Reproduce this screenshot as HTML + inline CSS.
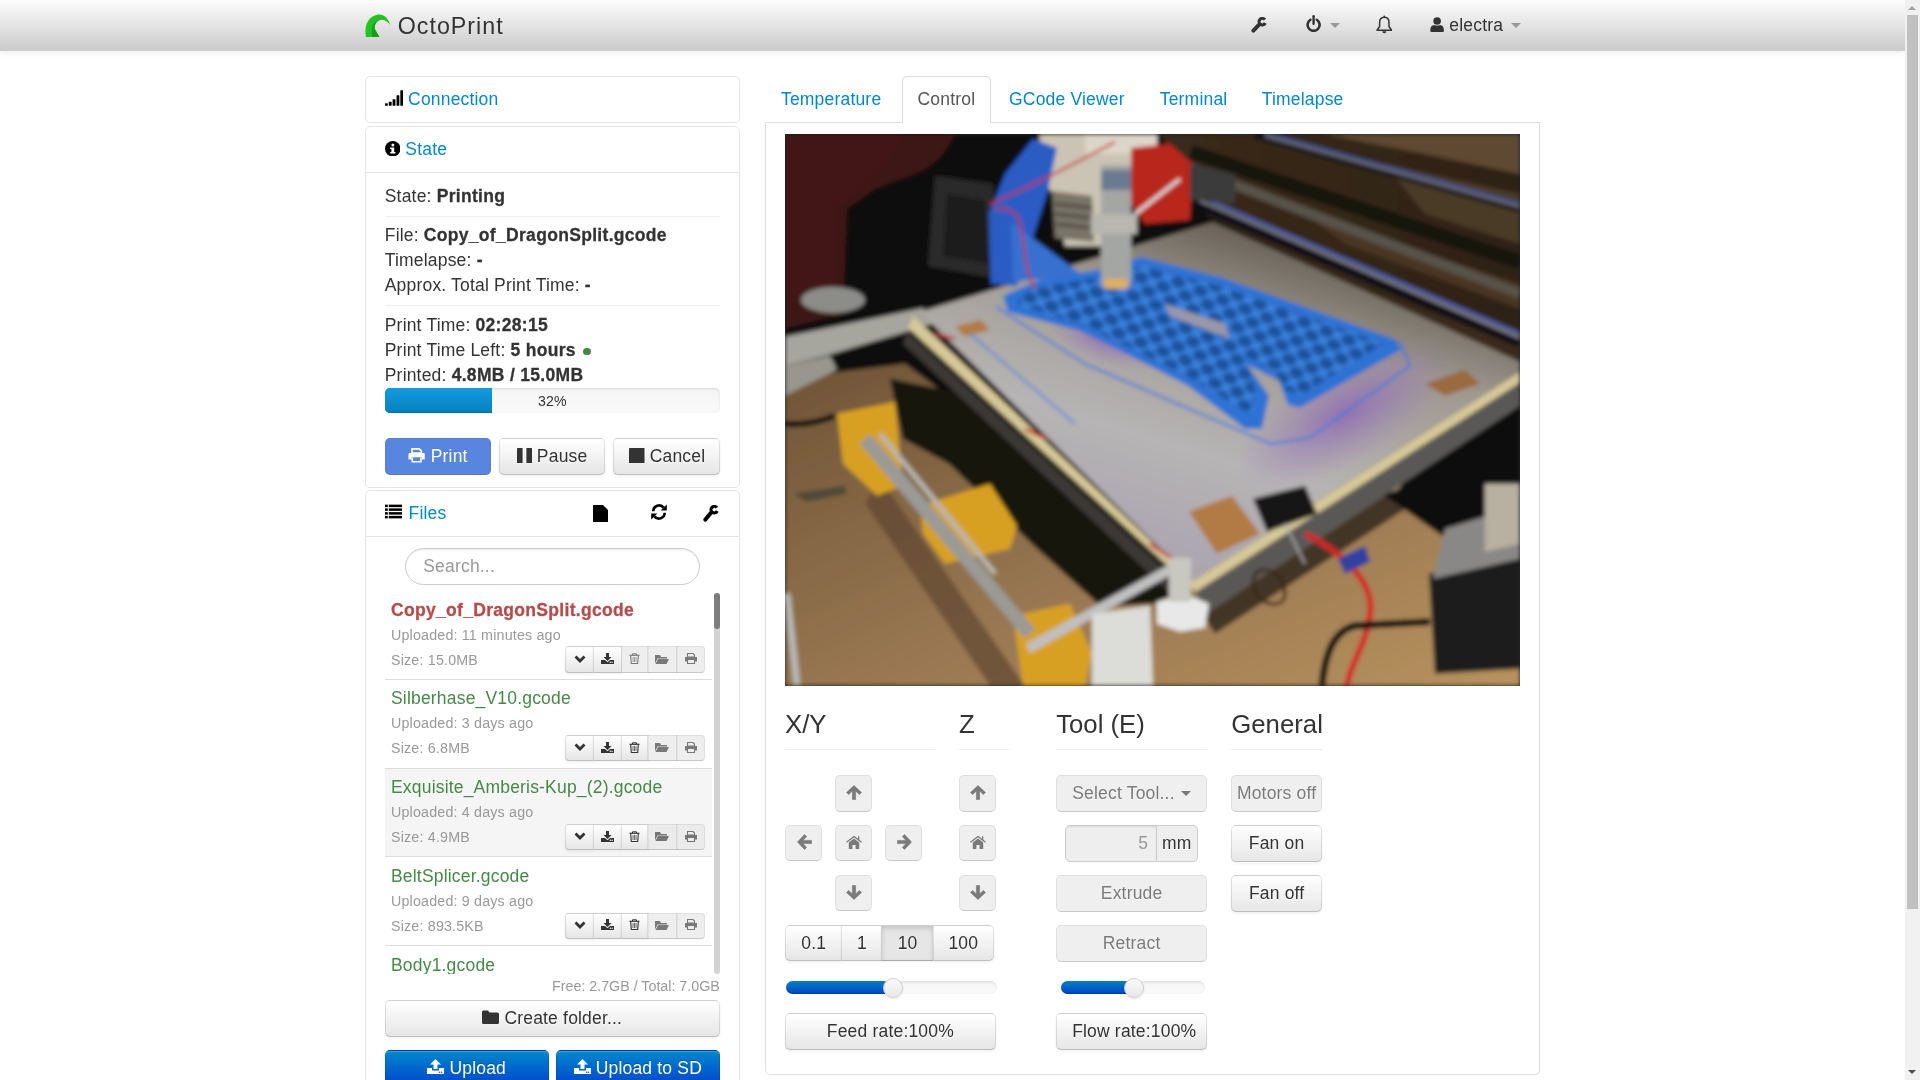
<!DOCTYPE html>
<html>
<head>
<meta charset="utf-8">
<style>
html,body{margin:0;padding:0;overflow:hidden;width:1920px;height:1080px;background:#fff}
body{font-family:"Liberation Sans",sans-serif;font-size:14px;line-height:20px;color:#333;letter-spacing:0.15px}
strong,.text-error{letter-spacing:0.25px;-webkit-text-stroke:0.22px currentColor}
#page{will-change:transform;zoom:1.25;width:1524px;height:864px;position:relative;overflow:hidden}
a{color:#0088cc;text-decoration:none}
svg{display:inline-block;vertical-align:middle}
#sb{position:absolute;left:1905px;top:0;width:15px;height:1080px;background:#f1f1f1}
#sb .th{position:absolute;left:2px;width:11px;top:15px;height:894px;background:#c1c1c1}
#sb .up,#sb .dn{position:absolute;left:3px;width:0;height:0;border-left:4.5px solid transparent;border-right:4.5px solid transparent}
#sb .up{top:5.8px;border-bottom:4.5px solid #a3a3a3}
#sb .dn{top:1070px;border-top:4.5px solid #505050}
/* navbar */
.navbar{position:absolute;left:0;top:0;width:1524px;height:40px;background:linear-gradient(to bottom,#fdfdfd,#cbcbcb);border-bottom:1px solid #cfcfcf;box-shadow:0 1px 6px rgba(0,0,0,.12)}
.container{position:absolute;left:292px;width:940px;top:0}
.brand{position:absolute;left:0;top:0;height:40px;font-size:18.6px;line-height:40px;color:#333;font-weight:normal;letter-spacing:0.8px}
.brand .logo{position:absolute;left:0;top:11.4px}
.brand span{position:absolute;left:26.2px;top:1.1px;white-space:nowrap}
.navr{position:absolute;right:0;top:0;height:40px}
.navr .it{position:absolute;top:0;height:40px;line-height:40px;color:#333}
.caret{display:inline-block;width:0;height:0;vertical-align:top;border-top:4px solid #999;border-right:4px solid transparent;border-left:4px solid transparent}
/* accordion */
.acc{position:absolute;left:0;width:298px;border:1px solid #e5e5e5;border-radius:4px;background:#fff}
.acch{height:36px;padding:0 15px;line-height:36px;position:relative}
.acch a{font-size:14px}
.acci{border-top:1px solid #e5e5e5;padding:9px 15px;position:relative}
hr{margin:5px 0;border:0;border-top:1px solid #eee;border-bottom:1px solid #fff;height:0}
.btn{display:inline-block;box-sizing:border-box;padding:4px 12px;font-size:14px;line-height:20px;text-align:center;vertical-align:middle;color:#333;text-shadow:0 1px 1px rgba(255,255,255,.75);background-color:#f5f5f5;background-image:linear-gradient(to bottom,#ffffff,#e6e6e6);border:1px solid #cccccc;border-color:rgba(0,0,0,.1) rgba(0,0,0,.1) rgba(0,0,0,.25);border-radius:4px;box-shadow:inset 0 1px 0 rgba(255,255,255,.2),0 1px 2px rgba(0,0,0,.05);white-space:nowrap}
.btn.dis{background-image:none;background-color:#e6e6e6;opacity:.65;box-shadow:none}
.btn-primary{color:#fff;text-shadow:0 -1px 0 rgba(0,0,0,.25);background-color:#006dcc;background-image:linear-gradient(to bottom,#0088cc,#0044cc);border-color:rgba(0,0,0,.1) rgba(0,0,0,.1) rgba(0,0,0,.25)}
.btn-primary.dis{background-image:none;background-color:#0044cc;opacity:.65}
.progress{position:relative;height:20px;overflow:hidden;background-color:#f7f7f7;background-image:linear-gradient(to bottom,#f5f5f5,#f9f9f9);border-radius:4px;box-shadow:inset 0 1px 2px rgba(0,0,0,.1)}
.progress .bar{position:absolute;left:0;top:0;height:20px;background-color:#0e90d2;background-image:linear-gradient(to bottom,#149bdf,#0480be);box-shadow:inset 0 -1px 0 rgba(0,0,0,.15)}
.progress .txt{position:absolute;left:0;right:0;top:0.8px;text-align:center;font-size:11.3px;line-height:20px;color:#333;letter-spacing:0.1px}

.hic{position:absolute;line-height:0}
.hic svg{display:block}
.search{position:absolute;left:31px;top:45.6px;width:236px;height:29.2px;box-sizing:border-box;border:1px solid #ccc;border-radius:15px;padding:4px 14px;font-size:14px;line-height:20px;color:#999;box-shadow:inset 0 1px 1px rgba(0,0,0,.075)}
.flist{position:absolute;left:15px;top:80.3px;width:261.6px;height:306px;overflow:hidden}
.entry{position:absolute;left:0;width:261.6px;height:70px;border-bottom:1px solid #ddd;box-sizing:content-box;font-size:11.4px;line-height:20px}
.entry .title{position:relative;top:0px;padding:5px 5px 0;line-height:20px;font-size:14px;white-space:nowrap}
.entry small{font-size:11.4px;line-height:20px;padding-left:5px;display:block;height:20px}
.muted{color:#999}
.text-error{color:#b94a48;font-weight:bold}
.text-success{color:#468847}
.bg{position:absolute;left:144.3px;top:44px;height:21px;width:112px}
.btn.bm{position:absolute;top:0;height:21px;padding:0;line-height:17px;font-size:10.5px;border-radius:0}
.btn.bm svg{vertical-align:middle;margin-top:-0.4px}
.rail{position:absolute;left:278.1px;top:81.2px;width:4.8px;height:305px;background:#d3d3d3;border-radius:3px}
.rail .thumb{position:absolute;left:0;top:0;width:4.8px;height:29.3px;background:#7d7d7d;border-radius:3px}
.free{position:absolute;right:15px;top:386.2px;font-size:11.4px;letter-spacing:0;line-height:20px;color:#999;white-space:nowrap}

.tabsline{position:absolute;left:612px;top:97.7px;width:620px;height:0;border-top:1px solid #ddd}
.tab{position:absolute;top:60.7px;height:38px;box-sizing:border-box;padding:8px 12px;line-height:20px;border:1px solid transparent;white-space:nowrap;color:#0088cc}
.tab.active{color:#555;background:#fff;border:1px solid #ddd;border-bottom-color:#fff;border-radius:4px 4px 0 0;height:38px}
.tabc{position:absolute;left:612px;top:98.7px;width:618px;height:760.6px;border:1px solid #ddd;border-top:0;border-radius:0 0 4px 4px}
.jh{position:absolute;top:568px;height:31.2px;border-bottom:1px solid #eee;font-size:20.6px;line-height:23px;color:#333;white-space:nowrap;letter-spacing:0}
.btn.box{position:absolute;width:29.2px;height:29.2px;padding:0;line-height:26.5px}
.btn.box svg{vertical-align:middle;margin-top:-3px;position:relative;left:0.9px;top:0.6px}
.btn.dgr{position:absolute;top:739.6px;height:29px;padding:4px 0}
.btn.act{background-image:none;background-color:#e6e6e6;box-shadow:inset 0 2px 4px rgba(0,0,0,.15),0 1px 2px rgba(0,0,0,.05)}
.strack{position:absolute;height:10.7px;border-radius:5.3px;background:linear-gradient(to bottom,#f5f5f5,#f9f9f9);box-shadow:inset 0 1px 2px rgba(0,0,0,.1)}
.ssel{position:absolute;height:10.7px;border-radius:5.3px 0 0 5.3px;background:linear-gradient(to bottom,#0480be,#0044cc);box-shadow:inset 0 -1px 0 rgba(0,0,0,.15)}
.shandle{position:absolute;width:16px;height:16px;border-radius:50%;box-sizing:border-box;border:1px solid #d0d0d0;background:linear-gradient(to bottom,#fafafa,#e8e8e8);box-shadow:0 1px 2px rgba(0,0,0,.1)}
.inpapp{position:absolute;height:29.8px;width:106px}
.inp{position:absolute;left:0;top:0;width:73.1px;height:29.8px;box-sizing:border-box;border:1px solid #ccc;border-radius:4px 0 0 4px;background:#eee;text-align:right;padding:4px 6px;color:#999;box-shadow:inset 0 1px 1px rgba(0,0,0,.075)}
.addon{position:absolute;left:73.1px;top:0;width:32.9px;height:29.8px;box-sizing:border-box;border:1px solid #ccc;border-left:0;border-radius:0 4px 4px 0;background:#eee;text-align:center;padding:4px 0;color:#333;text-shadow:0 1px 0 #fff}
</style>
</head>
<body>
<div id="page">
  <div class="navbar">
    <div class="container">
      <a class="brand" href="#">
        <svg class="logo" width="20.4" height="18.6" viewBox="0 0 25.5 23.2"><path d="M0.9 22.9 C-0.6 15 1 2.5 13.3 0.5 C18.5 -0.2 23.5 4 25.3 11 C22.5 7.5 19.5 5.5 16.3 5.8 C12 6.3 9.2 10 9.8 15 L14.4 22.9 Z" fill="#22c322"/><path d="M7.2 22.9 C5.8 16 7 9.5 12 6.8 C13.5 6 15 5.8 16.3 5.8 C12 6.3 9.2 10 9.8 15 L14.4 22.9 Z" fill="#15a015"/></svg>
        <span>OctoPrint</span>
      </a>
      <div class="navr">
        <div class="it" style="right:218px;width:13px"><svg width="12.8" height="12.8" viewBox="0 0 16 16" style="margin-top:-3px"><path d="M15.2 1.85 A4.8 4.8 0 1 0 15.65 6.63 L12.84 5.32 A1.7 1.7 0 1 1 12.69 3.62 Z" fill="#333"/><path d="M7.6 8.2 L2.4 13.6" stroke="#333" stroke-width="4" stroke-linecap="round"/></svg></div>
        <div class="it" style="right:160px;width:28px"><svg width="12.8" height="13.6" viewBox="0 0 16 17" style="margin-top:-4px;margin-left:0.2px"><path d="M5.42 4.76 A6 6 0 1 0 11.78 4.76" stroke="#333" stroke-width="2.6" fill="none" stroke-linecap="round"/><path d="M8.6 1.3 V8.8" stroke="#333" stroke-width="2.4" stroke-linecap="round"/></svg><span class="caret" style="margin-top:18px;margin-left:6.6px"></span></div>
        <div class="it" style="right:117.4px;width:14px"><svg width="13.3" height="14.8" viewBox="0 0 16.6 18.5" style="margin-top:-3px"><path d="M1 15.2 L3.6 11.5 V7.5 C3.6 4 5.6 2.2 8.3 2.2 C11 2.2 13 4 13 7.5 V11.5 L15.6 15.2 Z" stroke="#333" stroke-width="1.5" fill="none" stroke-linejoin="round"/><circle cx="8.3" cy="1.3" r="0.9" fill="#333"/><path d="M6.3 16.3 A2 2 0 0 0 10.3 16.3 Z" fill="#333"/></svg></div>
        <div class="it" style="right:15px;width:73px;white-space:nowrap;font-size:14px"><svg width="11.4" height="12.4" viewBox="0 0 12 13" style="margin-top:-3px"><circle cx="6" cy="3.3" r="3.2" fill="#333"/><path d="M0.3 11.3 C0.3 8 1.8 7 3.6 6.8 C4.6 7.4 7.4 7.4 8.4 6.8 C10.2 7 11.7 8 11.7 11.3 Q11.7 12.8 10.5 12.8 H1.5 Q0.3 12.8 0.3 11.3 Z" fill="#333"/></svg> electra <span class="caret" style="margin-top:18px;margin-left:2px"></span></div>
      </div>
    </div>
  </div>

  <div class="container" style="top:0">
    <!-- Connection -->
    <div class="acc" style="top:60.8px">
      <div class="acch"><a href="#"><svg width="14.6" height="12.6" viewBox="0 0 18.2 15.7" style="margin-top:-4px;margin-right:0px"><rect x="0" y="13.1" width="2.8" height="2.6" rx="0.5" fill="#000"/><rect x="3.8" y="11.799999999999999" width="2.8" height="3.9" rx="0.5" fill="#000"/><rect x="7.6" y="9.2" width="2.8" height="6.5" rx="0.5" fill="#000"/><rect x="11.5" y="5.299999999999999" width="2.8" height="10.4" rx="0.5" fill="#000"/><rect x="15.3" y="0.1999999999999993" width="2.8" height="15.5" rx="0.5" fill="#000"/></svg> Connection</a></div>
    </div>
    <!-- State -->
    <div class="acc" style="top:100.8px">
      <div class="acch"><a href="#"><svg width="12.4" height="12.4" viewBox="0 0 15.5 15.5" style="margin-top:-3px"><circle cx="7.75" cy="7.75" r="7.75" fill="#000"/><circle cx="7.9" cy="3.9" r="1.5" fill="#fff"/><path d="M5.2 6.4 H9.2 V10.9 H10.4 V12.6 H5.2 V10.9 H6.4 V8.1 H5.2 Z" fill="#fff"/></svg> State</a></div>
      <div class="acci" id="state">
        State: <strong>Printing</strong>
        <hr style="margin:5px 0 4.4px">
        File: <strong>Copy_of_DragonSplit.gcode</strong><br>
        Timelapse: <strong>-</strong><br>
        Approx. Total Print Time: <strong>-</strong>
        <hr style="margin:5.6px 0 5px">
        Print Time: <strong>02:28:15</strong><br>
        Print Time Left: <strong>5 hours</strong> <span style="display:inline-block;width:6px;height:6px;border-radius:3px;background:#468847;vertical-align:middle;margin-left:2px"></span><br>
        Printed: <strong>4.8MB / 15.0MB</strong><br>
        <div class="progress" style="margin-top:0px"><div class="bar" style="width:86px"></div><div class="txt">32%</div></div>
        <div style="height:19.8px"></div>
        <div style="position:relative;height:30px">
          <span class="btn btn-primary dis" style="position:absolute;left:0;top:0;width:85.3px"><svg width="13.8" height="11.7" viewBox="0 0 17.3 14.6" style="margin-top:-3px"><path d="M4 0.8 H11.3 L13.3 2.8 V5 H4 Z" fill="none" stroke="#fff" stroke-width="1.6"/><path d="M0.5 6.3 Q0.5 5 1.8 5 H15.5 Q16.8 5 16.8 6.3 V11.6 H13.8 V9.2 H3.5 V11.6 H0.5 Z" fill="#fff"/><path d="M4.3 9.5 V13.8 H13 V9.5" fill="none" stroke="#fff" stroke-width="1.6"/></svg> Print</span>
          <span class="btn" style="position:absolute;left:91.4px;top:0;width:85px"><svg width="12" height="12.24" viewBox="0 0 15 15.3" style="margin-top:-3px"><rect x="0" y="0" width="5.6" height="15.3" rx="0.6" fill="#333"/><rect x="9.4" y="0" width="5.6" height="15.3" rx="0.6" fill="#333"/></svg> Pause</span>
          <span class="btn" style="position:absolute;left:182.7px;top:0;width:85.3px"><svg width="12.4" height="12.24" viewBox="0 0 15.5 15.3" style="margin-top:-3px"><rect x="0" y="0" width="15.5" height="15.3" rx="0.6" fill="#333"/></svg> Cancel</span>
        </div>
      </div>
    </div>
    <!-- Files -->
    <div class="acc" id="files" style="top:392px;height:520px">
      <div class="acch"><a href="#"><svg width="14" height="12" viewBox="0 0 14 12" style="margin-top:-4px;margin-right:1px"><g fill="#000"><rect x="0" y="0.5" width="2.2" height="2"/><rect x="3" y="0.5" width="11" height="2"/><rect x="0" y="3.5" width="2.2" height="2"/><rect x="3" y="3.5" width="11" height="2"/><rect x="0" y="6.5" width="2.2" height="2"/><rect x="3" y="6.5" width="11" height="2"/><rect x="0" y="9.5" width="2.2" height="2"/><rect x="3" y="9.5" width="11" height="2"/></g></svg> Files</a>
      </div>
      <div class="acci" style="position:absolute;left:0;top:36px;width:298px;height:600px;padding:0;border-top:1px solid #e5e5e5"></div>
      <a class="hic" style="left:181.2px;top:11.4px"><svg width="12.00" height="13.60" viewBox="0 0 15 17" style=""><path d="M0 0 H10 L15 5 V17 H0 Z" fill="#000"/></svg></a>
      <a class="hic" style="left:227.8px;top:10.1px"><svg width="12.80" height="12.80" viewBox="0 0 16 16" style=""><path d="M2.3 7.2 A5.8 5.8 0 0 1 12.6 3.6" stroke="#000" stroke-width="2.6" fill="none"/><path d="M15.8 0.4 V6.6 H9.6 Z" fill="#000"/><path d="M13.7 8.8 A5.8 5.8 0 0 1 3.4 12.4" stroke="#000" stroke-width="2.6" fill="none"/><path d="M0.2 15.6 V9.4 H6.4 Z" fill="#000"/></svg></a>
      <a class="hic" style="left:269.4px;top:10.9px"><svg width="12.80" height="13.60" viewBox="0 0 16 17" style=""><path d="M15.2 1.85 A4.8 4.8 0 1 0 15.65 6.63 L12.84 5.32 A1.7 1.7 0 1 1 12.69 3.62 Z" fill="#000"/><path d="M7.6 8.2 L2.4 14.6" stroke="#000" stroke-width="4" stroke-linecap="round"/></svg></a>
      <div class="search">Search...</div>
      <div class="flist"><div class="entry" style="top:0px;"><div class="title text-error">Copy_of_DragonSplit.gcode</div><small class="muted">Uploaded: 11 minutes ago</small><small class="muted">Size: 15.0MB</small><div class="bg"><span class="btn bm" style="left:0.0px;width:23.2px;border-radius:3px 0 0 3px;"><svg width="9.60" height="6.40" viewBox="0 0 12 8" style=""><path d="M1.5 1.5 L6 6 L10.5 1.5" stroke="#333" stroke-width="2.8" fill="none" stroke-linejoin="miter"/></svg></span><span class="btn bm" style="left:22.2px;width:23.6px;border-radius:0;"><svg width="10.40" height="8.80" viewBox="0 0 13 11" style=""><path d="M5 0 H8 V4 H10.5 L6.5 8 L2.5 4 H5 Z" fill="#333"/><path d="M0 7 H4 L6.5 9.3 L9 7 H13 V11 H0 Z" fill="#333"/><circle cx="9.3" cy="9.3" r="0.7" fill="#fff"/><circle cx="11.2" cy="9.3" r="0.7" fill="#fff"/></svg></span><span class="btn bm dis" style="left:44.8px;width:22.0px;border-radius:0;"><svg width="8.80" height="8.80" viewBox="0 0 11 11" style=""><path d="M0.5 2.3 H10.5" stroke="#333" stroke-width="1.2"/><path d="M3.5 2 V0.8 H7.5 V2" stroke="#333" stroke-width="1" fill="none"/><path d="M1.7 3 L2.3 10.5 H8.7 L9.3 3" stroke="#333" stroke-width="1.1" fill="none"/><path d="M4 4 V9 M5.5 4 V9 M7 4 V9" stroke="#333" stroke-width="0.7"/></svg></span><span class="btn bm dis" style="left:65.8px;width:24.1px;border-radius:0;"><svg width="11.20" height="8.00" viewBox="0 0 14 10" style=""><path d="M0 1 V9.5 L2.5 4.5 H12 V3 H6 L5 1 Z" fill="#333"/><path d="M0.5 10 L3 5 H14 L11.5 10 Z" fill="#333"/></svg></span><span class="btn bm dis" style="left:88.9px;width:23.2px;border-radius:0 3px 3px 0;"><svg width="9.60" height="8.80" viewBox="0 0 12 11" style=""><path d="M2.5 0.5 H8 L9.5 2 V4 H2.5 Z" fill="none" stroke="#333" stroke-width="1.1"/><path d="M0 4 H12 V8.5 H10 V7 H2 V8.5 H0 Z" fill="#333"/><path d="M2.5 7 V10.5 H9.5 V7" fill="none" stroke="#333" stroke-width="1.1"/></svg></span></div></div><div class="entry" style="top:71px;"><div class="title text-success">Silberhase_V10.gcode</div><small class="muted">Uploaded: 3 days ago</small><small class="muted">Size: 6.8MB</small><div class="bg"><span class="btn bm" style="left:0.0px;width:23.2px;border-radius:3px 0 0 3px;"><svg width="9.60" height="6.40" viewBox="0 0 12 8" style=""><path d="M1.5 1.5 L6 6 L10.5 1.5" stroke="#333" stroke-width="2.8" fill="none" stroke-linejoin="miter"/></svg></span><span class="btn bm" style="left:22.2px;width:23.6px;border-radius:0;"><svg width="10.40" height="8.80" viewBox="0 0 13 11" style=""><path d="M5 0 H8 V4 H10.5 L6.5 8 L2.5 4 H5 Z" fill="#333"/><path d="M0 7 H4 L6.5 9.3 L9 7 H13 V11 H0 Z" fill="#333"/><circle cx="9.3" cy="9.3" r="0.7" fill="#fff"/><circle cx="11.2" cy="9.3" r="0.7" fill="#fff"/></svg></span><span class="btn bm" style="left:44.8px;width:22.0px;border-radius:0;"><svg width="8.80" height="8.80" viewBox="0 0 11 11" style=""><path d="M0.5 2.3 H10.5" stroke="#333" stroke-width="1.2"/><path d="M3.5 2 V0.8 H7.5 V2" stroke="#333" stroke-width="1" fill="none"/><path d="M1.7 3 L2.3 10.5 H8.7 L9.3 3" stroke="#333" stroke-width="1.1" fill="none"/><path d="M4 4 V9 M5.5 4 V9 M7 4 V9" stroke="#333" stroke-width="0.7"/></svg></span><span class="btn bm dis" style="left:65.8px;width:24.1px;border-radius:0;"><svg width="11.20" height="8.00" viewBox="0 0 14 10" style=""><path d="M0 1 V9.5 L2.5 4.5 H12 V3 H6 L5 1 Z" fill="#333"/><path d="M0.5 10 L3 5 H14 L11.5 10 Z" fill="#333"/></svg></span><span class="btn bm dis" style="left:88.9px;width:23.2px;border-radius:0 3px 3px 0;"><svg width="9.60" height="8.80" viewBox="0 0 12 11" style=""><path d="M2.5 0.5 H8 L9.5 2 V4 H2.5 Z" fill="none" stroke="#333" stroke-width="1.1"/><path d="M0 4 H12 V8.5 H10 V7 H2 V8.5 H0 Z" fill="#333"/><path d="M2.5 7 V10.5 H9.5 V7" fill="none" stroke="#333" stroke-width="1.1"/></svg></span></div></div><div class="entry" style="top:142px;background:#f5f5f5;"><div class="title text-success">Exquisite_Amberis-Kup_(2).gcode</div><small class="muted">Uploaded: 4 days ago</small><small class="muted">Size: 4.9MB</small><div class="bg"><span class="btn bm" style="left:0.0px;width:23.2px;border-radius:3px 0 0 3px;"><svg width="9.60" height="6.40" viewBox="0 0 12 8" style=""><path d="M1.5 1.5 L6 6 L10.5 1.5" stroke="#333" stroke-width="2.8" fill="none" stroke-linejoin="miter"/></svg></span><span class="btn bm" style="left:22.2px;width:23.6px;border-radius:0;"><svg width="10.40" height="8.80" viewBox="0 0 13 11" style=""><path d="M5 0 H8 V4 H10.5 L6.5 8 L2.5 4 H5 Z" fill="#333"/><path d="M0 7 H4 L6.5 9.3 L9 7 H13 V11 H0 Z" fill="#333"/><circle cx="9.3" cy="9.3" r="0.7" fill="#fff"/><circle cx="11.2" cy="9.3" r="0.7" fill="#fff"/></svg></span><span class="btn bm" style="left:44.8px;width:22.0px;border-radius:0;"><svg width="8.80" height="8.80" viewBox="0 0 11 11" style=""><path d="M0.5 2.3 H10.5" stroke="#333" stroke-width="1.2"/><path d="M3.5 2 V0.8 H7.5 V2" stroke="#333" stroke-width="1" fill="none"/><path d="M1.7 3 L2.3 10.5 H8.7 L9.3 3" stroke="#333" stroke-width="1.1" fill="none"/><path d="M4 4 V9 M5.5 4 V9 M7 4 V9" stroke="#333" stroke-width="0.7"/></svg></span><span class="btn bm dis" style="left:65.8px;width:24.1px;border-radius:0;"><svg width="11.20" height="8.00" viewBox="0 0 14 10" style=""><path d="M0 1 V9.5 L2.5 4.5 H12 V3 H6 L5 1 Z" fill="#333"/><path d="M0.5 10 L3 5 H14 L11.5 10 Z" fill="#333"/></svg></span><span class="btn bm dis" style="left:88.9px;width:23.2px;border-radius:0 3px 3px 0;"><svg width="9.60" height="8.80" viewBox="0 0 12 11" style=""><path d="M2.5 0.5 H8 L9.5 2 V4 H2.5 Z" fill="none" stroke="#333" stroke-width="1.1"/><path d="M0 4 H12 V8.5 H10 V7 H2 V8.5 H0 Z" fill="#333"/><path d="M2.5 7 V10.5 H9.5 V7" fill="none" stroke="#333" stroke-width="1.1"/></svg></span></div></div><div class="entry" style="top:213px;"><div class="title text-success">BeltSplicer.gcode</div><small class="muted">Uploaded: 9 days ago</small><small class="muted">Size: 893.5KB</small><div class="bg"><span class="btn bm" style="left:0.0px;width:23.2px;border-radius:3px 0 0 3px;"><svg width="9.60" height="6.40" viewBox="0 0 12 8" style=""><path d="M1.5 1.5 L6 6 L10.5 1.5" stroke="#333" stroke-width="2.8" fill="none" stroke-linejoin="miter"/></svg></span><span class="btn bm" style="left:22.2px;width:23.6px;border-radius:0;"><svg width="10.40" height="8.80" viewBox="0 0 13 11" style=""><path d="M5 0 H8 V4 H10.5 L6.5 8 L2.5 4 H5 Z" fill="#333"/><path d="M0 7 H4 L6.5 9.3 L9 7 H13 V11 H0 Z" fill="#333"/><circle cx="9.3" cy="9.3" r="0.7" fill="#fff"/><circle cx="11.2" cy="9.3" r="0.7" fill="#fff"/></svg></span><span class="btn bm" style="left:44.8px;width:22.0px;border-radius:0;"><svg width="8.80" height="8.80" viewBox="0 0 11 11" style=""><path d="M0.5 2.3 H10.5" stroke="#333" stroke-width="1.2"/><path d="M3.5 2 V0.8 H7.5 V2" stroke="#333" stroke-width="1" fill="none"/><path d="M1.7 3 L2.3 10.5 H8.7 L9.3 3" stroke="#333" stroke-width="1.1" fill="none"/><path d="M4 4 V9 M5.5 4 V9 M7 4 V9" stroke="#333" stroke-width="0.7"/></svg></span><span class="btn bm dis" style="left:65.8px;width:24.1px;border-radius:0;"><svg width="11.20" height="8.00" viewBox="0 0 14 10" style=""><path d="M0 1 V9.5 L2.5 4.5 H12 V3 H6 L5 1 Z" fill="#333"/><path d="M0.5 10 L3 5 H14 L11.5 10 Z" fill="#333"/></svg></span><span class="btn bm dis" style="left:88.9px;width:23.2px;border-radius:0 3px 3px 0;"><svg width="9.60" height="8.80" viewBox="0 0 12 11" style=""><path d="M2.5 0.5 H8 L9.5 2 V4 H2.5 Z" fill="none" stroke="#333" stroke-width="1.1"/><path d="M0 4 H12 V8.5 H10 V7 H2 V8.5 H0 Z" fill="#333"/><path d="M2.5 7 V10.5 H9.5 V7" fill="none" stroke="#333" stroke-width="1.1"/></svg></span></div></div><div class="entry" style="top:284px;"><div class="title text-success">Body1.gcode</div></div></div>
      <div class="rail"><div class="thumb"></div></div>
      <div class="free">Free: 2.7GB / Total: 7.0GB</div>
      <span class="btn" style="position:absolute;left:15px;top:406.8px;width:268px"><svg width="13.60" height="11.20" viewBox="0 0 17 14" style="margin-top:-3px"><path d="M0 2 Q0 0.5 1.5 0.5 H6 L7.5 2.5 H15.5 Q17 2.5 17 4 V12.5 Q17 14 15.5 14 H1.5 Q0 14 0 12.5 Z" fill="#333"/></svg> Create folder...</span>
      <span class="btn btn-primary" style="position:absolute;left:15px;top:446.8px;width:131.1px"><svg width="13.60" height="12.00" viewBox="0 0 17 15" style="margin-top:-4px"><path d="M8.5 0 L14 5.5 H10.5 V10 H6.5 V5.5 H3 Z" fill="#fff"/><path d="M0 9 H5 V11.5 H12 V9 H17 V15 H0 Z" fill="#fff"/><circle cx="12.5" cy="13.2" r="0.8" fill="#0050c8"/><circle cx="14.6" cy="13.2" r="0.8" fill="#0050c8"/></svg> Upload</span>
      <span class="btn btn-primary" style="position:absolute;left:151.9px;top:446.8px;width:131.1px"><svg width="13.60" height="12.00" viewBox="0 0 17 15" style="margin-top:-4px"><path d="M8.5 0 L14 5.5 H10.5 V10 H6.5 V5.5 H3 Z" fill="#fff"/><path d="M0 9 H5 V11.5 H12 V9 H17 V15 H0 Z" fill="#fff"/><circle cx="12.5" cy="13.2" r="0.8" fill="#0050c8"/><circle cx="14.6" cy="13.2" r="0.8" fill="#0050c8"/></svg> Upload to SD</span>

    </div>
  </div>

<div class="tabsline"></div><a class="tab" style="left:612.0px">Temperature</a><div class="tab active" style="left:721.2px;width:71.2px">Control</div><a class="tab" style="left:794.4px">GCode Viewer</a><a class="tab" style="left:915.0px">Terminal</a><a class="tab" style="left:996.6px">Timelapse</a><div class="tabc"></div><div id="cam" style="position:absolute;left:628px;top:107.2px;width:588px;height:441.3px;background:#222;overflow:hidden"><svg width="588" height="441.3" viewBox="0 0 735 552" preserveAspectRatio="none" style="display:block">
<defs>
<filter id="bl" x="-5%" y="-5%" width="110%" height="110%"><feGaussianBlur stdDeviation="2.2"/></filter>
<linearGradient id="bedg" gradientUnits="userSpaceOnUse" x1="430" y1="90" x2="330" y2="420"><stop offset="0" stop-color="#6a6258"/><stop offset="0.25" stop-color="#9e9890"/><stop offset="0.65" stop-color="#b6b4b4"/><stop offset="1" stop-color="#aaa4b0"/></linearGradient>
<pattern id="hc" width="24" height="20" patternUnits="userSpaceOnUse" patternTransform="rotate(22)"><rect width="24" height="20" fill="#3a80dc"/><ellipse cx="12.0" cy="10.0" rx="7.5" ry="6" fill="#1f529e"/><ellipse cx="0" cy="0" rx="7.5" ry="6" fill="#1f529e"/><ellipse cx="24" cy="0" rx="7.5" ry="6" fill="#1f529e"/><ellipse cx="0" cy="20" rx="7.5" ry="6" fill="#1f529e"/><ellipse cx="24" cy="20" rx="7.5" ry="6" fill="#1f529e"/></pattern>
<radialGradient id="purp" cx="0.5" cy="0.5" r="0.5"><stop offset="0" stop-color="#8a64b8" stop-opacity="0.8"/><stop offset="1" stop-color="#9c78c0" stop-opacity="0"/></radialGradient>
<linearGradient id="woodg" x1="0" y1="0" x2="1" y2="1"><stop offset="0" stop-color="#6e5436"/><stop offset="0.5" stop-color="#957450"/><stop offset="1" stop-color="#b8925e"/></linearGradient>
<linearGradient id="wallg" x1="0" y1="0" x2="1" y2="0"><stop offset="0" stop-color="#3a2a1a"/><stop offset="1" stop-color="#2e2218"/></linearGradient>
</defs>
<g filter="url(#bl)">
<rect x="0" y="0" width="735" height="552" fill="#0e0a08"/>
<!-- red fabric top-left -->
<path d="M0 0 H170 C160 20 150 32 130 40 L90 55 L62 75 L58 180 L0 195 Z" fill="#3c1712"/>
<path d="M0 0 H120 L100 30 L70 60 L50 70 L48 160 L0 170 Z" fill="#461a12" opacity="0.7"/>
<!-- top right wall -->
<path d="M375 0 H735 V232 L600 170 L420 80 Z" fill="url(#wallg)"/>
<path d="M540 0 H735 V40 L640 20 Z" fill="#5e4a32"/><path d="M600 30 L735 60 V110 L640 80 Z" fill="#4a3a28"/>
<path d="M520 80 L735 150 V175 L560 110 Z" fill="#4a3624"/>
<path d="M450 110 L735 210 V225 L480 140 Z" fill="#3a2a1c"/>
<!-- rods -->
<path d="M470 0 L735 74" stroke="#14141c" stroke-width="9"/>
<path d="M480 -1 L735 70" stroke="#4a5a98" stroke-width="2.5"/><path d="M480 2 L735 73" stroke="#c0c0c8" stroke-width="1"/>
<path d="M406 34 L735 160" stroke="#58524a" stroke-width="10"/><path d="M406 18 L735 128" stroke="#141210" stroke-width="14"/>
<path d="M399 62 L735 206" stroke="#101018" stroke-width="15"/>
<path d="M399 56 L735 200" stroke="#5a6ab0" stroke-width="3"/><path d="M399 60 L735 204" stroke="#c8c8d0" stroke-width="1.2"/>
<!-- wood floor -->
<path d="M0 245 L120 230 L200 290 L410 450 L735 250 V552 H0 Z" fill="url(#woodg)"/>
<path d="M0 290 C20 292 35 288 50 282" stroke="#101010" stroke-width="6" fill="none"/><path d="M8 360 L60 352 L62 360 L22 368 Z" fill="#504838"/><path d="M10 720 L40 552" stroke="none"/><path d="M95 345 L240 552 H205 L80 370 Z" fill="#5e4630" opacity="0.7"/>
<path d="M2 460 L12 552" stroke="#b8b8b4" stroke-width="7"/>
<!-- dark under-bed -->
<path d="M105 245 L208 266 L337 380 L410 452 L368 470 L315 472 L251 414 L164 330 L118 305 Z" fill="#141210"/>
<path d="M418 482 L735 272 V300 L430 500 Z" fill="#2a241c" opacity="0.8"/>
<path d="M585 330 L735 262 V398 L660 404 L600 362 Z" fill="#0a0807"/><circle cx="605" cy="345" r="13" fill="#a89070"/>
<!-- gray ribbon cable -->
<path d="M0 203 L138 174 L148 190 L40 222 L0 232 Z" fill="#a6a59e"/>
<path d="M0 232 L45 222 L52 236 L0 262 Z" fill="#98968e"/>
<ellipse cx="48" cy="166" rx="32" ry="13" fill="#8c8c88"/>
<!-- bed foam/edge -->
<path d="M128 182 L408 447 L735 238 V249 L411 458 L123 194 Z" fill="#d6c898"/>
<path d="M411 458 L735 249 V272 L418 482 Z" fill="#5a5856"/>
<path d="M122 198 L412 466 L405 478 L118 210 Z" fill="#3a3836"/>
<!-- bed top -->
<path d="M135 178 L428 88 L735 228 V238 L408 447 Z" fill="url(#bedg)"/>
<ellipse cx="560" cy="280" rx="120" ry="50" fill="url(#purp)" transform="rotate(-30 560 280)"/>
<ellipse cx="320" cy="205" rx="60" ry="25" fill="url(#purp)" transform="rotate(20 320 205)"/>
<!-- red marks & copper -->
<path d="M150 200 L170 205" stroke="#c03030" stroke-width="3"/>
<path d="M240 295 L262 305" stroke="#c03030" stroke-width="3"/>
<path d="M365 410 L395 430" stroke="#c03030" stroke-width="3"/>
<path d="M404 378 L447 362 L475 400 L432 420 Z" fill="#b27a45"/>
<path d="M170 193 L195 186 L205 196 L180 203 Z" fill="#b27a45"/>
<path d="M640 250 L680 236 L695 250 L660 262 Z" fill="#9a6a40"/>
<path d="M185 200 L290 290" stroke="#4a88d8" stroke-width="2"/>
<!-- blue skirt line -->
<path d="M211 173 L300 230 L420 282 L486 310 L525 304 L625 232 L615 208" stroke="#3a7ad8" stroke-width="2.2" fill="none"/>
<!-- blue print -->
<path d="M218 162 L256 145 L319 135 L357 123 L438 144 L534 178 L611 206 L616 216 L515 274 L503 271 L494 247 L462 231 L484 262 L477 295 L460 295 L403 252 L343 221 L295 197 L223 178 Z" fill="#2e72d4"/>
<path d="M232 163 L260 152 L320 142 L357 132 L436 152 L530 185 L598 210 L515 262 L500 256 L490 240 L460 222 L470 255 L468 282 L405 244 L345 214 L295 190 L235 172 Z" fill="url(#hc)"/>
<path d="M380 170 L440 190 L445 205 L385 182 Z" fill="#9a98a8"/>
<!-- extruder group -->
<path d="M150 42 L208 50 L215 145 L143 132 Z" fill="#2c2c2c"/>
<path d="M162 60 L200 66 L204 130 L158 122 Z" fill="#1a1a1a"/>
<path d="M255 0 H372 L368 50 L348 52 L342 95 L322 112 L280 112 L268 60 L252 38 Z" fill="#cbc4b4"/>
<path d="M300 0 H372 V20 H300 Z" fill="#ddd6c8"/>
<path d="M267 57 L307 62 L309 108 L270 104 Z" fill="#787468"/>
<path d="M270 70 L307 74 M270 80 L308 84 M271 90 L308 94" stroke="#3a3834" stroke-width="2.5"/>
<path d="M330 50 H346 V100 H330 Z" fill="#2a2824"/>
<path d="M316 31 H346 V153 H316 Z" fill="#a4a6a4"/>
<path d="M316 36 H346 V56 H316 Z" fill="#6a7a90"/>
<path d="M306 80 H352 V100 H306 Z" fill="#b8b6ae"/>
<path d="M320 145 H342 V155 H320 Z" fill="#e0b060"/>
<path d="M346 14 L385 10 L408 30 L405 86 L360 90 L346 70 Z" fill="#b8281c"/>
<path d="M405 30 L450 40 L450 70 L405 66 Z" fill="#3a3a3a"/>
<path d="M248 5 L272 14 L262 60 L232 152 L206 150 L204 80 L220 40 Z" fill="#2a5cc4"/>
<path d="M226 88 L296 140 L228 148 Z" fill="#3870d0"/>
<path d="M205 70 C230 60 270 40 330 8" stroke="#c02020" stroke-width="2" fill="none"/>
<path d="M210 75 C250 70 230 120 250 155" stroke="#c02020" stroke-width="2" fill="none"/>
<path d="M350 80 L395 45" stroke="#e8e8e8" stroke-width="3"/>
<!-- yellow parts -->
<path d="M52 280 L110 268 L118 352 L92 362 L58 330 Z" fill="#d8a020"/>
<path d="M135 372 L205 350 L232 392 L225 415 L160 430 L138 400 Z" fill="#d8a020"/>
<path d="M228 482 L285 470 L307 520 L300 552 H238 Z" fill="#d8a020"/>
<!-- threaded rod & smooth rods -->
<path d="M80 305 L245 500" stroke="#9a9a96" stroke-width="14"/>
<path d="M95 300 L210 440" stroke="#b8b8b0" stroke-width="5"/>
<path d="M243 515 L385 436" stroke="#c0c0c0" stroke-width="10"/>
<!-- white parts -->
<path d="M372 468 L400 460 L424 470 L420 494 L395 498 L372 490 Z" fill="#e8e8e8"/>
<path d="M384 424 H406 V468 H384 Z" fill="#c8c8c0"/>
<path d="M307 480 L365 472 L368 552 H307 Z" fill="#dcdcd8"/>
<!-- binder clip -->
<path d="M468 365 L520 352 L532 380 L482 398 Z" fill="#181818"/><path d="M500 390 L520 430" stroke="#aaa" stroke-width="2"/>
<!-- red wire & black cable -->
<path d="M520 400 C560 420 590 450 585 480 C582 510 565 530 562 552" stroke="#d02828" stroke-width="6" fill="none"/>
<path d="M537 552 C540 520 548 498 570 492 L645 488" stroke="#0c0c0c" stroke-width="7" fill="none"/>
<path d="M553 425 L580 412 L585 428 L560 440 Z" fill="#3040a0"/>
<!-- stepper motor -->
<path d="M644 440 L735 420 V535 L650 540 Z" fill="#1c1c1c"/>
<path d="M660 395 L735 372 V425 L648 445 Z" fill="#8a8886"/>
<path d="M700 350 H735 V410 L700 418 Z" fill="#b8b0a0"/>
<!-- brown rubber band -->
<path d="M470 440 C460 470 500 480 500 460 C500 440 480 430 470 440" stroke="#3a2614" stroke-width="3" fill="none"/>
</g>
</svg>

</div><div class="jh" style="left:628px;width:120.1px">X/Y</div><div class="jh" style="left:767.2px;width:39.9px">Z</div><div class="jh" style="left:844.9px;width:120.8px">Tool (E)</div><div class="jh" style="left:985px;width:72.6px">General</div><span class="btn dis box" style="left:668px;top:620px"><svg width="12.80" height="12.00" viewBox="0 0 16 15" style=""><path d="M8 0.5 L15.5 7.5 L13.4 9.6 L9.6 6 V14.5 H6.4 V6 L2.6 9.6 L0.5 7.5 Z" fill="#333" stroke="#333" stroke-width="0.6" stroke-linejoin="round"/></svg></span><span class="btn dis box" style="left:628px;top:659.9px"><svg width="12.00" height="12.80" viewBox="0 0 15 16" style=""><path d="M0.5 8 L7.5 0.5 L9.6 2.6 L6 6.4 H14.5 V9.6 H6 L9.6 13.4 L7.5 15.5 Z" fill="#333" stroke="#333" stroke-width="0.6" stroke-linejoin="round"/></svg></span><span class="btn dis box" style="left:668px;top:659.9px"><svg width="12.80" height="10.40" viewBox="0 0 16 13" style=""><path d="M0.5 6.2 L8 0.5 L15.5 6.2" stroke="#333" stroke-width="1.3" fill="none"/><path d="M12 0.3 H13.3 V4.5 L12 3.5 Z" fill="#333"/><path d="M2.8 6.5 L8 2.5 L13.2 6.5 V13 H9.6 V9 H6.4 V13 H2.8 Z" fill="#333"/></svg></span><span class="btn dis box" style="left:708.2px;top:659.9px"><svg width="12.00" height="12.80" viewBox="0 0 15 16" style=""><path d="M14.5 8 L7.5 0.5 L5.4 2.6 L9 6.4 H0.5 V9.6 H9 L5.4 13.4 L7.5 15.5 Z" fill="#333" stroke="#333" stroke-width="0.6" stroke-linejoin="round"/></svg></span><span class="btn dis box" style="left:668px;top:699.8px"><svg width="12.80" height="12.00" viewBox="0 0 16 15" style=""><path d="M8 14.5 L15.5 7.5 L13.4 5.4 L9.6 9 V0.5 H6.4 V9 L2.6 5.4 L0.5 7.5 Z" fill="#333" stroke="#333" stroke-width="0.6" stroke-linejoin="round"/></svg></span><span class="btn dis box" style="left:767.2px;top:620px"><svg width="12.80" height="12.00" viewBox="0 0 16 15" style=""><path d="M8 0.5 L15.5 7.5 L13.4 9.6 L9.6 6 V14.5 H6.4 V6 L2.6 9.6 L0.5 7.5 Z" fill="#333" stroke="#333" stroke-width="0.6" stroke-linejoin="round"/></svg></span><span class="btn dis box" style="left:767.2px;top:659.9px"><svg width="12.80" height="10.40" viewBox="0 0 16 13" style=""><path d="M0.5 6.2 L8 0.5 L15.5 6.2" stroke="#333" stroke-width="1.3" fill="none"/><path d="M12 0.3 H13.3 V4.5 L12 3.5 Z" fill="#333"/><path d="M2.8 6.5 L8 2.5 L13.2 6.5 V13 H9.6 V9 H6.4 V13 H2.8 Z" fill="#333"/></svg></span><span class="btn dis box" style="left:767.2px;top:699.8px"><svg width="12.80" height="12.00" viewBox="0 0 16 15" style=""><path d="M8 14.5 L15.5 7.5 L13.4 5.4 L9.6 9 V0.5 H6.4 V9 L2.6 5.4 L0.5 7.5 Z" fill="#333" stroke="#333" stroke-width="0.6" stroke-linejoin="round"/></svg></span><span class="btn dgr" style="left:628px;width:45.96px;border-radius:4px 0 0 4px">0.1</span><span class="btn dgr" style="left:672.96px;width:33.04px;border-radius:0">1</span><span class="btn dgr act" style="left:705px;width:42.1px;border-radius:0">10</span><span class="btn dgr" style="left:746.1px;width:49.1px;border-radius:0 4px 4px 0">100</span><div class="strack" style="left:628.8px;top:784.65px;width:168.8px"></div><div class="ssel" style="left:628.8px;top:784.65px;width:85.8px"></div><div class="shandle" style="left:706.60px;top:782.00px"></div><div class="strack" style="left:848.6px;top:784.65px;width:115.1px"></div><div class="ssel" style="left:848.6px;top:784.65px;width:58.8px"></div><div class="shandle" style="left:899.40px;top:782.00px"></div><span class="btn" style="position:absolute;left:628px;top:810.6px;width:168.6px">Feed rate:100%</span><span class="btn" style="position:absolute;left:844.9px;top:810.6px;width:120.8px">Flow rate:100%</span><span class="btn dis" style="position:absolute;left:844.9px;top:620px;width:120.8px">Select Tool... <span class="caret" style="border-top-color:#333;margin-top:8px;margin-left:1px"></span></span><div class="inpapp" style="left:852.2px;top:659.9px"><div class="inp">5</div><div class="addon">mm</div></div><span class="btn dis" style="position:absolute;left:844.9px;top:699.8px;width:120.8px">Extrude</span><span class="btn dis" style="position:absolute;left:844.9px;top:739.6px;width:120.8px">Retract</span><span class="btn dis" style="position:absolute;left:985px;top:620px;width:72.6px;padding:4px 0">Motors off</span><span class="btn" style="position:absolute;left:985px;top:659.9px;width:72.6px;padding:4px 0">Fan on</span><span class="btn" style="position:absolute;left:985px;top:699.8px;width:72.6px;padding:4px 0">Fan off</span>
</div>
<div id="sb"><div class="up"></div><div class="th"></div><div class="dn"></div></div>
</body>
</html>
